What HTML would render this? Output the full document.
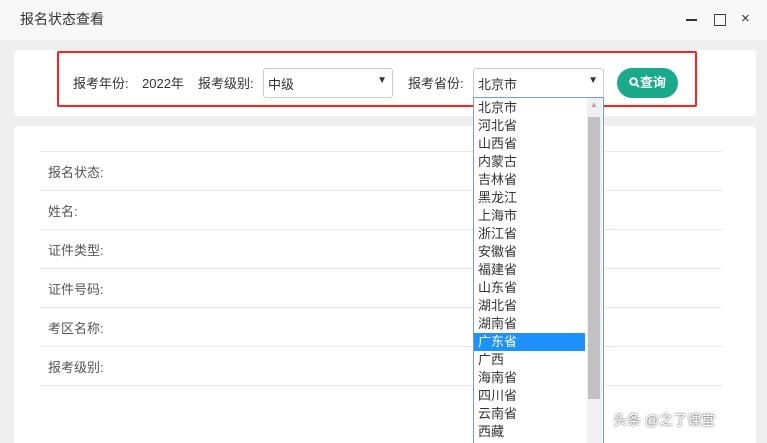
<!DOCTYPE html><html><head><meta charset="utf-8"><style>
html,body{margin:0;width:767px;height:443px;overflow:hidden}
body{background:#efefef;font-family:"Liberation Sans","Noto Sans CJK SC",sans-serif;font-size:13px;color:#333;position:relative}
.top{position:absolute;left:0;top:0;width:767px;height:40px;background:#f8f8f8}
.title{position:absolute;left:20px;top:9px;font-size:14px;color:#333}
.card{position:absolute;background:#fff;border-radius:4px}
.red{position:absolute;left:57px;top:51px;width:636px;height:52px;border:2px solid #ff2020;border-radius:2px}
.t{position:absolute;white-space:nowrap}
.sel{position:absolute;background:#fff;border:1px solid #ccc;border-radius:3px;height:28px}
.btn{position:absolute;left:617px;top:68px;width:61px;height:30px;border-radius:15px;background:#1aaa8a;color:#fff;font-weight:bold;font-size:13px;line-height:30px;text-align:center}
.line{position:absolute;left:40px;width:682px;height:1px;background:#e6e6e6}
.lab{position:absolute;left:48px;color:#555}
.list{position:absolute;left:473px;top:97px;width:129px;height:360px;border:1px solid #7a9cd3;background:#fff;overflow:hidden}
.list div{height:18px;line-height:18px;padding-left:4px;width:107px;color:#333}
</style></head><body>
<div class="top"></div>
<div class="title">报名状态查看</div>
<div style="position:absolute;left:686px;top:19px;width:11px;height:2px;background:#333"></div>
<div style="position:absolute;left:714px;top:14px;width:10px;height:10px;border:1px solid #444"></div>
<div class="t" style="left:741px;top:10px;font-size:15px">×</div>
<div class="card" style="left:14px;top:50px;width:742px;height:66px"></div>
<div class="card" style="left:14px;top:126px;width:742px;height:330px"></div>
<div class="red"></div>
<div class="t" style="left:73px;top:73px">报考年份:</div>
<div class="t" style="left:142px;top:73px">2022年</div>
<div class="t" style="left:198px;top:73px">报考级别:</div>
<div class="sel" style="left:263px;top:68px;width:128px"><span class="t" style="left:4px;top:5px">中级</span><span class="t" style="right:5px;top:6px;font-size:10px">▼</span></div>
<div class="t" style="left:408px;top:73px">报考省份:</div>
<div class="sel" style="left:473px;top:68px;width:129px"><span class="t" style="left:4px;top:5px">北京市</span><span class="t" style="right:5px;top:6px;font-size:10px">▼</span></div>
<div class="btn"><svg width="11" height="11" viewBox="0 0 11 11" style="vertical-align:-1px"><circle cx="4.5" cy="4.5" r="3.3" fill="none" stroke="#fff" stroke-width="2"/><line x1="7" y1="7" x2="10" y2="10" stroke="#fff" stroke-width="2"/></svg>查询</div>
<div class="line" style="top:151px"></div><div class="line" style="top:190px"></div><div class="line" style="top:229px"></div><div class="line" style="top:268px"></div><div class="line" style="top:307px"></div><div class="line" style="top:346px"></div><div class="line" style="top:385px"></div>
<div class="lab" style="top:162px">报名状态:</div>
<div class="lab" style="top:201px">姓名:</div>
<div class="lab" style="top:240px">证件类型:</div>
<div class="lab" style="top:279px">证件号码:</div>
<div class="lab" style="top:318px">考区名称:</div>
<div class="lab" style="top:357px">报考级别:</div>
<div class="list">
<div style="margin-top:1px">北京市</div><div>河北省</div><div>山西省</div><div>内蒙古</div><div>吉林省</div><div>黑龙江</div><div>上海市</div><div>浙江省</div><div>安徽省</div><div>福建省</div><div>山东省</div><div>湖北省</div><div>湖南省</div><div style="background:#1e90ff;color:#fff">广东省</div><div>广西</div><div>海南省</div><div>四川省</div><div>云南省</div><div>西藏</div>
<span style="position:absolute;left:113px;top:0;width:15px;height:360px;background:#f0f0f0"></span>
<span style="position:absolute;left:114px;top:19px;width:12px;height:282px;background:#c1c1c1"></span>
<span style="position:absolute;left:116px;top:2px;font-size:8px;color:#aaa">▲</span>
</div>
<div class="t" style="left:613px;top:410px;font-size:14px;color:#fff;text-shadow:0 0 2px #333">头条 @之了课堂</div>
</body></html>
